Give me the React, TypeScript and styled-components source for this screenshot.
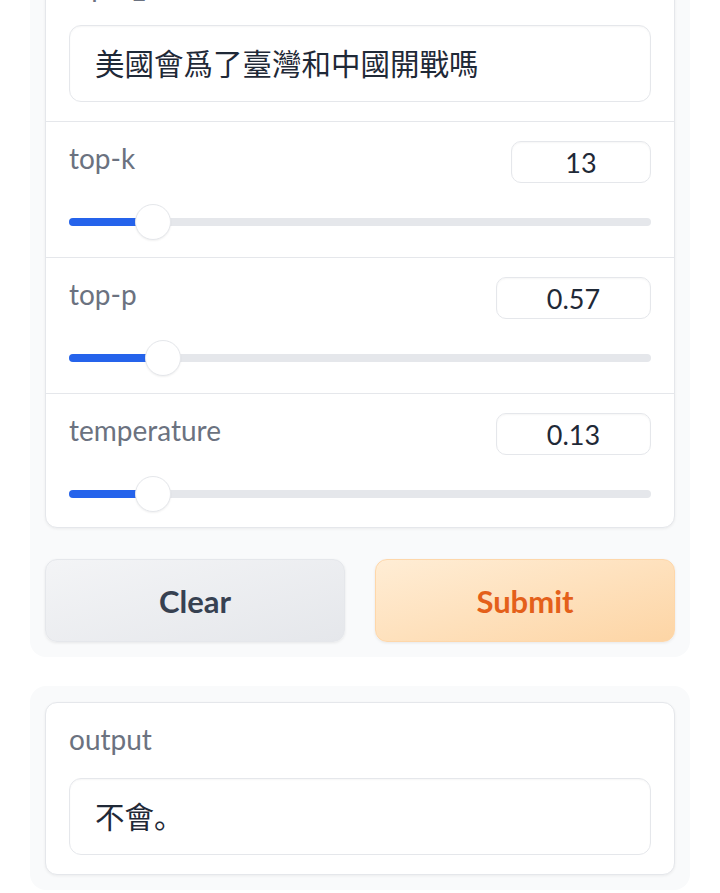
import React from "react";
import styled, { createGlobalStyle } from "styled-components";

const GlobalStyle = createGlobalStyle`
  body {
    margin: 0;
    background: #ffffff;
    font-family: Lato, "Noto Sans CJK SC", sans-serif;
  }
`;

const Page = styled.div`
  display: flex;
  flex-direction: column;
  gap: 29px;
  padding: 0 30px;
  margin-top: -67px;
`;

const Panel = styled.div`
  display: flex;
  flex-direction: column;
  gap: 31px;
  padding: 16px 15px 15px;
  background: #f9fafb;
  border-radius: 16px;
`;

const Card = styled.div`
  background: #ffffff;
  border: 1px solid #e5e7eb;
  border-radius: 12px;
  box-shadow: 0 1px 3px rgba(0, 0, 0, 0.06);
  overflow: hidden;
`;

const Block = styled.div<{ $bottom?: number }>`
  padding: 19px 23px ${(p) => p.$bottom ?? 19}px;
  & + & {
    border-top: 1px solid #e5e7eb;
  }
`;

const Label = styled.div`
  font-size: 28px;
  line-height: 34px;
  color: #6b7280;
`;

const TextBox = styled.div`
  margin-top: 22px;
  height: 77px;
  box-sizing: border-box;
  display: flex;
  align-items: center;
  padding: 0 25px 4px;
  border: 1px solid #e5e7eb;
  border-radius: 12px;
  box-shadow: inset 0 1px 2px rgba(0, 0, 0, 0.04);
  font-family: Lato, "Noto Sans CJK SC", sans-serif;
  font-size: 29.5px;
  color: #1f2937;
`;

const Header = styled.div`
  display: flex;
  justify-content: space-between;
  align-items: flex-start;
  margin-bottom: 21px;
`;

const NumberBox = styled.div<{ $width: number }>`
  width: ${(p) => p.$width}px;
  height: 42px;
  box-sizing: border-box;
  display: flex;
  align-items: center;
  justify-content: center;
  border: 1px solid #e5e7eb;
  border-radius: 10px;
  box-shadow: inset 0 1px 2px rgba(0, 0, 0, 0.04);
  font-size: 27px;
  color: #1f2937;
`;

const Track = styled.div`
  position: relative;
  height: 36px;
  display: flex;
  align-items: center;
`;

const Rail = styled.div`
  flex: 1;
  height: 8px;
  border-radius: 4px;
  background: #e5e7eb;
  overflow: hidden;
`;

const Fill = styled.div`
  height: 100%;
  background: #2563eb;
`;

const Thumb = styled.div`
  position: absolute;
  top: 0;
  width: 36px;
  height: 36px;
  box-sizing: border-box;
  margin-left: -18px;
  border-radius: 50%;
  background: #ffffff;
  border: 1px solid #e5e7eb;
  box-shadow: 0 1px 2px rgba(0, 0, 0, 0.06);
`;

const Buttons = styled.div`
  display: grid;
  grid-template-columns: 1fr 1fr;
  gap: 30px;
`;

const Button = styled.button<{ $primary?: boolean }>`
  height: 83px;
  border-radius: 12px;
  font-family: Lato, sans-serif;
  font-size: 31px;
  font-weight: 700;
  cursor: pointer;
  border: 1px solid ${(p) => (p.$primary ? "#fed7aa" : "#e5e7eb")};
  color: ${(p) => (p.$primary ? "#e4601a" : "#374151")};
  background: ${(p) =>
    p.$primary
      ? "linear-gradient(to bottom right, #ffedd5, #fdd5a5)"
      : "linear-gradient(to bottom right, #f3f4f6, #e5e7eb)"};
  box-shadow: 0 1px 3px rgba(0, 0, 0, 0.08);
`;

interface SliderProps {
  label: string;
  value: string;
  boxWidth: number;
  percent: number;
  bottom?: number;
}

const Slider = ({ label, value, boxWidth, percent, bottom = 17 }: SliderProps) => (
  <Block $bottom={bottom}>
    <Header>
      <Label>{label}</Label>
      <NumberBox $width={boxWidth}>{value}</NumberBox>
    </Header>
    <Track>
      <Rail>
        <Fill style={{ width: `${percent}%` }} />
      </Rail>
      <Thumb style={{ left: `${percent}%` }} />
    </Track>
  </Block>
);

export default function App() {
  return (
    <>
      <GlobalStyle />
      <Page>
        <Panel>
          <Card>
            <Block>
              <Label>input_text</Label>
              <TextBox>美國會爲了臺灣和中國開戰嗎</TextBox>
            </Block>
            <Slider label="top-k" value="13" boxWidth={140} percent={14.4} />
            <Slider label="top-p" value="0.57" boxWidth={155} percent={16.1} />
            <Slider
              label="temperature"
              value="0.13"
              boxWidth={155}
              percent={14.4}
              bottom={15}
            />
          </Card>
          <Buttons>
            <Button>Clear</Button>
            <Button $primary>Submit</Button>
          </Buttons>
        </Panel>
        <Panel>
          <Card>
            <Block>
              <Label>output</Label>
              <TextBox>不會。</TextBox>
            </Block>
          </Card>
        </Panel>
      </Page>
    </>
  );
}
